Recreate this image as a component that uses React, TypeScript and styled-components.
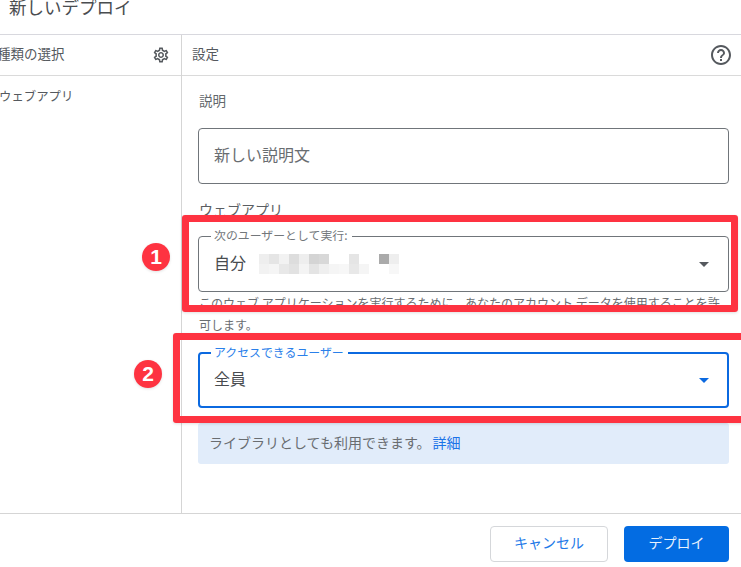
import React from "react";
import styled, { createGlobalStyle } from "styled-components";
import { MdHelpOutline, MdOutlineSettings } from "react-icons/md";

const GlobalStyle = createGlobalStyle`
	* {
		box-sizing: border-box;
	}
	html,
	body {
		margin: 0;
		padding: 0;
		background: #fff;
		overflow: hidden;
	}
`;

const Page = styled.div`
	position: relative;
	width: 741px;
	height: 567px;
	overflow: hidden;
	display: flex;
	flex-direction: column;
	background: #fff;
	color: #5f6368;
	font-family: "Noto Sans CJK JP", "Noto Sans", sans-serif;
`;

// --- title ---
const TitleBar = styled.div`
	height: 35px;
	flex: none;
	display: flex;
	align-items: flex-end;
	padding: 0 0 15px 9px;
	border-bottom: 1px solid #d8d8de;
`;

const Title = styled.h1`
	margin: 0;
	font-size: 17.5px;
	font-weight: 400;
	line-height: 24px;
	color: #4a4d50;
`;

// --- panes ---
const Panes = styled.div`
	flex: 1;
	min-height: 0;
	display: flex;
`;

const SidePane = styled.aside`
	width: 182px;
	flex: none;
	border-right: 1px solid #d5d5d5;
`;

const MainPane = styled.main`
	flex: 1;
	min-width: 0;
`;

const PaneHead = styled.div<{ $side?: boolean }>`
	height: 41px;
	display: flex;
	align-items: center;
	justify-content: space-between;
	border-bottom: 1px solid #dadada;
	padding: ${({ $side }) => ($side ? "0 11px 0 0" : "0 8px 0 11px")};
	font-size: 13.5px;
	color: #55595e;

	svg {
		display: block;
		color: #55595e;
	}
`;

const HeadText = styled.span<{ $side?: boolean }>`
	margin-left: ${({ $side }) => ($side ? "-3px" : "-1px")};
	padding-bottom: 4px;
`;

const SideItem = styled.div`
	margin: 10px 0 0 -1px;
	font-size: 12.4px;
	line-height: 20px;
	color: #55595e;
`;

const Form = styled.div`
	padding: 14px 12px 0 16px;
`;

const FieldCaption = styled.div`
	font-size: 13.5px;
	line-height: 20px;
	margin-left: 1px;
	color: #63676b;
`;

const Section = styled.div`
	margin: 15px 0 17px 1px;
	font-size: 14px;
	line-height: 20px;
	color: #5a5e62;
`;

const TextField = styled.div`
	height: 56px;
	margin-top: 18px;
	padding: 0 15px 5px;
	display: flex;
	align-items: center;
	border: 1px solid #70757a;
	border-radius: 4px;
	font-size: 16px;
	color: #696d71;
`;

const Select = styled.div<{ $active?: boolean }>`
	position: relative;
	height: 56px;
	padding: ${({ $active }) => ($active ? "0 18px 0 14px" : "0 19px 0 15px")};
	display: flex;
	align-items: center;
	gap: 13px;
	border: ${({ $active }) => ($active ? "2px solid #0b69e0" : "1px solid #70757a")};
	border-radius: 4px;
	font-size: 16px;
	color: #484b4f;
`;

const SelectValue = styled.span`
	padding-bottom: 5px;
`;

const SelectLabel = styled.span<{ $active?: boolean }>`
	position: absolute;
	top: -9px;
	left: ${({ $active }) => ($active ? "11px" : "12px")};
	padding: 0 4px 0 3px;
	background: #fff;
	font-size: 11.9px;
	line-height: 14px;
	color: ${({ $active }) => ($active ? "#2a80ea" : "#73777b")};
`;

const Caret = styled.svg`
	margin-left: auto;
	flex: none;
`;

const Help = styled.p`
	margin: 0 0 16px 1px;
	font-size: 12px;
	line-height: 22px;
	color: #696d71;
`;

const Info = styled.div`
	height: 41px;
	margin-top: 15px;
	padding: 0 11px 4px;
	display: flex;
	align-items: center;
	gap: 2px;
	border-radius: 3px;
	background: #e1ecfa;
	font-size: 14px;
	color: #696d71;
`;

const InfoLink = styled.a`
	color: #1a73e8;
`;

// --- footer ---
const Footer = styled.footer`
	height: 54px;
	flex: none;
	display: flex;
	justify-content: flex-end;
	gap: 16px;
	padding: 12px 12px 0 0;
	border-top: 1px solid #d5d5d5;
`;

const FooterButton = styled.button<{ $primary?: boolean }>`
	width: ${({ $primary }) => ($primary ? "105px" : "118px")};
	height: 36px;
	padding: 0 0 4px;
	border-radius: 4px;
	border: ${({ $primary }) => ($primary ? "none" : "1px solid #d5d7da")};
	background: ${({ $primary }) => ($primary ? "#036ce2" : "#fff")};
	color: ${({ $primary }) => ($primary ? "#e8f1fd" : "#2279e8")};
	font-family: inherit;
	font-size: 14px;
`;

// --- annotations over the screenshot ---
const MarkBox = styled.div<{ $second?: boolean }>`
	position: absolute;
	left: ${({ $second }) => ($second ? "173px" : "182px")};
	top: ${({ $second }) => ($second ? "333px" : "215px")};
	right: ${({ $second }) => ($second ? "-10px" : "3px")};
	height: ${({ $second }) => ($second ? "90px" : "97px")};
	border: 7px solid #fe3341;
	border-radius: 3px;
	box-shadow: 0 1px 3px rgba(0, 0, 0, 0.12);
`;

const Badge = styled.div<{ $second?: boolean }>`
	position: absolute;
	left: ${({ $second }) => ($second ? "134px" : "142px")};
	top: ${({ $second }) => ($second ? "360px" : "243px")};
	width: 28px;
	height: 28px;
	border-radius: 50%;
	display: flex;
	align-items: center;
	justify-content: center;
	background: #fe3341;
	color: #fff;
	font-family: "Liberation Sans", sans-serif;
	font-size: 21px;
	font-weight: 700;
	box-shadow: 0 1px 3px rgba(0, 0, 0, 0.12);
`;

const BlurredName = styled.svg`
	display: block;
	flex: none;
`;

const topCells = ["#eee", "#e5e5e5", "#f2f2f2", "#ddd", "#eee", "#d4d4d4", "#d8d8d8", "", "", "#e5e5e5", "", "", "#aaa", "#eee"];
const bottomCells = ["#f2f2f2", "#f5f5f5", "#e8e8e8", "#e2e2e2", "#f4f4f4", "#e4e4e4", "#efefef", "#f5f5f5", "#f7f7f7", "#e8e8e8", "#f5f5f5", "", "", "#f7f7f7"];

function Mosaic() {
	return (
		<BlurredName width='140' height='20' viewBox='0 0 140 20'>
			{[topCells, bottomCells].map((row, y) =>
				row.map((fill, x) => (fill ? <rect key={`${x}-${y}`} x={x * 10} y={y * 10} width='10' height='10' fill={fill} /> : null))
			)}
		</BlurredName>
	);
}

function DownCaret({ color }: { color: string }) {
	return (
		<Caret width='10' height='5' viewBox='0 0 10 5'>
			<path d='M0 0h10L5 5z' fill={color} />
		</Caret>
	);
}

export default function App() {
	return (
		<Page>
			<GlobalStyle />
			<TitleBar>
				<Title>新しいデプロイ</Title>
			</TitleBar>
			<Panes>
				<SidePane>
					<PaneHead $side>
						<HeadText $side>種類の選択</HeadText>
						<MdOutlineSettings size={18} />
					</PaneHead>
					<SideItem>ウェブアプリ</SideItem>
				</SidePane>
				<MainPane>
					<PaneHead>
						<HeadText>設定</HeadText>
						<MdHelpOutline size={24} />
					</PaneHead>
					<Form>
						<FieldCaption>説明</FieldCaption>
						<TextField>新しい説明文</TextField>
						<Section>ウェブアプリ</Section>
						<Select>
							<SelectLabel>次のユーザーとして実行:</SelectLabel>
							<SelectValue>自分</SelectValue>
							<Mosaic />
							<DownCaret color='#55595e' />
						</Select>
						<Help>このウェブ アプリケーションを実行するために、あなたのアカウント データを使用することを許可します。</Help>
						<Select $active>
							<SelectLabel $active>アクセスできるユーザー</SelectLabel>
							<SelectValue>全員</SelectValue>
							<DownCaret color='#0b69e0' />
						</Select>
						<Info>
							ライブラリとしても利用できます。
							<InfoLink>詳細</InfoLink>
						</Info>
					</Form>
				</MainPane>
			</Panes>
			<Footer>
				<FooterButton>キャンセル</FooterButton>
				<FooterButton $primary>デプロイ</FooterButton>
			</Footer>
			<MarkBox />
			<Badge>1</Badge>
			<MarkBox $second />
			<Badge $second>2</Badge>
		</Page>
	);
}
